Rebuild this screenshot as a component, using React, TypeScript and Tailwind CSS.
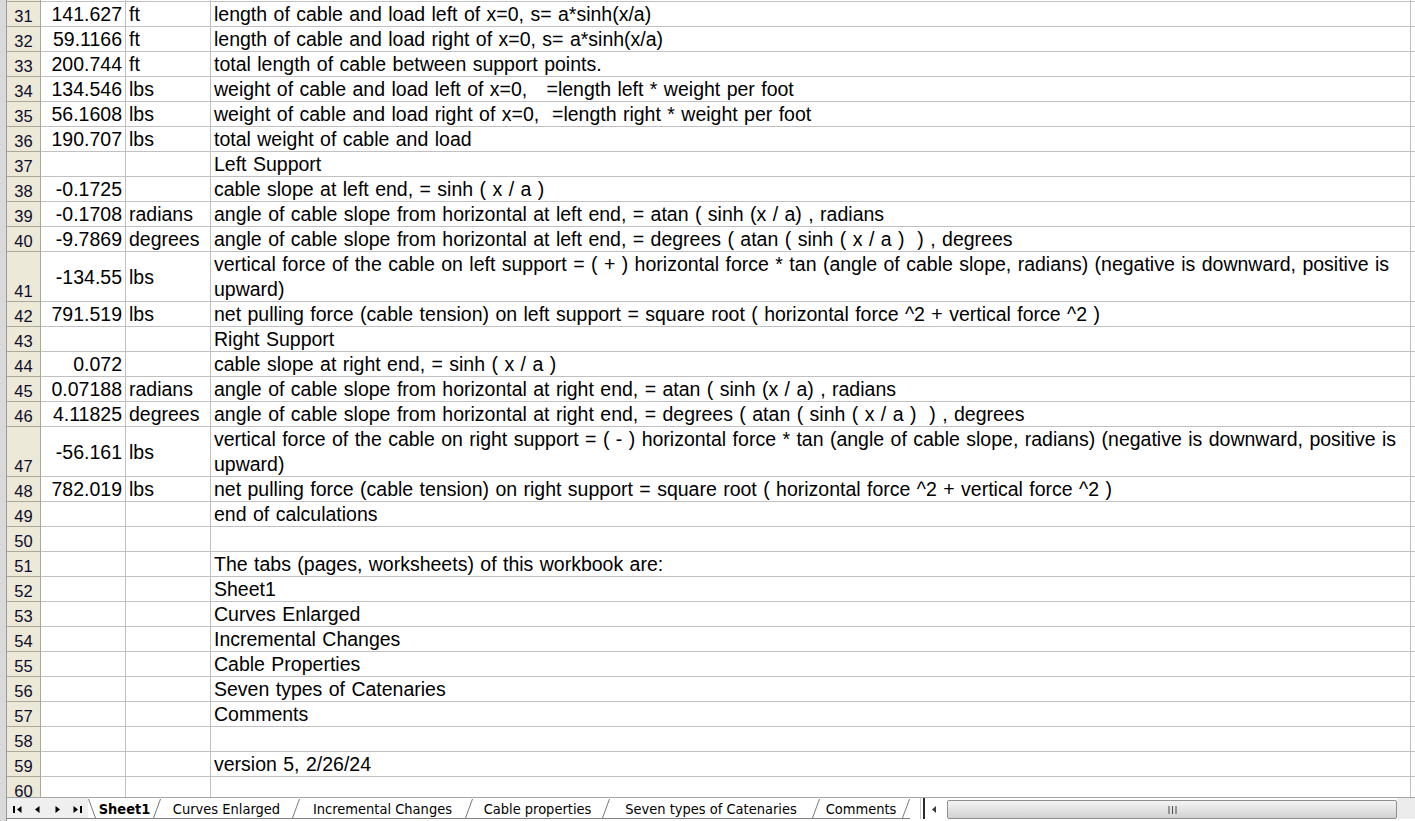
type Row = {
  n: number;
  b?: string;
  c?: string;
  d?: string[];
  tall?: boolean;
};

const rows: Row[] = [
  { n: 31, b: '141.627', c: 'ft', d: ['length of cable and load left of x=0, s= a*sinh(x/a)'] },
  { n: 32, b: '59.1166', c: 'ft', d: ['length of cable and load right of x=0, s= a*sinh(x/a)'] },
  { n: 33, b: '200.744', c: 'ft', d: ['total length of cable between support points.'] },
  { n: 34, b: '134.546', c: 'lbs', d: ['weight of cable and load left of x=0,   =length left * weight per foot'] },
  { n: 35, b: '56.1608', c: 'lbs', d: ['weight of cable and load right of x=0,  =length right * weight per foot'] },
  { n: 36, b: '190.707', c: 'lbs', d: ['total weight of cable and load'] },
  { n: 37, d: ['Left Support'] },
  { n: 38, b: '-0.1725', d: ['cable slope at left end, = sinh ( x / a )'] },
  { n: 39, b: '-0.1708', c: 'radians', d: ['angle of cable slope from horizontal at left end, = atan ( sinh (x / a) , radians'] },
  { n: 40, b: '-9.7869', c: 'degrees', d: ['angle of cable slope from horizontal at left end, = degrees ( atan ( sinh ( x / a )  ) , degrees'] },
  {
    n: 41,
    b: '-134.55',
    c: 'lbs',
    tall: true,
    d: [
      'vertical force of the cable on left support = ( + ) horizontal force * tan (angle of cable slope, radians) (negative is downward, positive is',
      'upward)',
    ],
  },
  { n: 42, b: '791.519', c: 'lbs', d: ['net pulling force (cable tension) on left support = square root ( horizontal force ^2 + vertical force ^2 )'] },
  { n: 43, d: ['Right Support'] },
  { n: 44, b: '0.072', d: ['cable slope at right end, = sinh ( x / a )'] },
  { n: 45, b: '0.07188', c: 'radians', d: ['angle of cable slope from horizontal at right end, = atan ( sinh (x / a) , radians'] },
  { n: 46, b: '4.11825', c: 'degrees', d: ['angle of cable slope from horizontal at right end, = degrees ( atan ( sinh ( x / a )  ) , degrees'] },
  {
    n: 47,
    b: '-56.161',
    c: 'lbs',
    tall: true,
    d: [
      'vertical force of the cable on right support = ( - ) horizontal force * tan (angle of cable slope, radians) (negative is downward, positive is',
      'upward)',
    ],
  },
  { n: 48, b: '782.019', c: 'lbs', d: ['net pulling force (cable tension) on right support = square root ( horizontal force ^2 + vertical force ^2 )'] },
  { n: 49, d: ['end of calculations'] },
  { n: 50 },
  { n: 51, d: ['The tabs (pages, worksheets) of this workbook are:'] },
  { n: 52, d: ['Sheet1'] },
  { n: 53, d: ['Curves Enlarged'] },
  { n: 54, d: ['Incremental Changes'] },
  { n: 55, d: ['Cable Properties'] },
  { n: 56, d: ['Seven types of Catenaries'] },
  { n: 57, d: ['Comments'] },
  { n: 58 },
  { n: 59, d: ['version 5, 2/26/24'] },
  { n: 60 },
];

const tabs = [
  { name: 'Curves Enlarged', w: 'w-[131px]' },
  { name: 'Incremental Changes', w: 'w-[165px]' },
  { name: 'Cable properties', w: 'w-[129px]' },
  { name: 'Seven types of Catenaries', w: 'w-[202px]' },
  { name: 'Comments', w: 'w-[82px]' },
];

export default function App() {
  return (
    <div className="flex h-[821px] w-[1415px] overflow-hidden bg-white font-['Liberation_Sans',Arial,sans-serif] text-black">
      <div className="w-[7px] shrink-0 border-r border-[#9a9a9a] bg-[#d9d9d9]" />
      <div className="flex min-w-0 flex-1 flex-col">
        <div className="min-h-0 flex-1 overflow-hidden">
          <div className="flex h-[2px]">
            <div className="w-[34px] shrink-0 border-r border-b border-[#aca899] bg-[#ece9d8]" />
            <div className="w-[85px] shrink-0 border-r border-b border-[#c0c0c0]" />
            <div className="w-[85px] shrink-0 border-r border-b border-[#c0c0c0]" />
            <div className="w-[1200px] shrink-0 border-r border-b border-[#c0c0c0]" />
            <div className="flex-1 border-b border-[#c0c0c0]" />
          </div>
          {rows.map((r) => (
            <SheetRow key={r.n} row={r} />
          ))}
        </div>
        <TabBar />
      </div>
    </div>
  );
}

function SheetRow({ row }: { row: Row }) {
  const h = row.tall ? 'h-[50px]' : 'h-[25px]';
  return (
    <div className={`flex ${h} text-[19.5px]`}>
      <div className="flex w-[34px] shrink-0 items-end justify-center border-r border-b border-[#aca899] bg-[#ece9d8] text-[16.5px] leading-[19px] text-[#0c0c2c]">
        {row.n}
      </div>
      <div className="flex w-[85px] shrink-0 items-center justify-end overflow-hidden whitespace-nowrap border-r border-b border-[#c0c0c0] pr-[3px] leading-[24px]">
        {row.b}
      </div>
      <div className="flex w-[85px] shrink-0 items-center overflow-hidden whitespace-nowrap border-r border-b border-[#c0c0c0] pl-[3px] leading-[24px]">
        {row.c}
      </div>
      <div className="w-[1200px] shrink-0 overflow-hidden whitespace-pre border-r border-b border-[#c0c0c0] pl-[3px] leading-[24px] [word-spacing:1px]">
        {row.d?.map((line, i) => (
          <div key={i} className={row.tall ? 'h-[25px] leading-[25px]' : ''}>
            {line}
          </div>
        ))}
      </div>
      <div className="flex-1 border-b border-[#c0c0c0]" />
    </div>
  );
}

function TabBar() {
  return (
    <div className="flex h-[24px] shrink-0 items-start border-t border-[#a5a5a5] bg-white font-['DejaVu_Sans_Condensed','DejaVu_Sans',Tahoma,sans-serif] text-[14.5px]">
      {/* sheet navigation buttons */}
      <div className="flex h-[21px] w-[81px] shrink-0 items-center border-b border-[#808080] bg-[#efefef] pt-[2px]">
        <NavIcon kind="first" className="ml-[6px]" />
        <NavIcon kind="prev" className="ml-[13px]" />
        <NavIcon kind="next" className="ml-[15px]" />
        <NavIcon kind="last" className="ml-[13px]" />
      </div>
      <div className="flex h-[21px] shrink-0 items-stretch border-b border-[#808080]">
        <Slant back />
        <div className="flex w-[57px] items-center justify-center bg-white pt-[3px] font-bold">Sheet1</div>
        <Slant />
        {tabs.map((t) => (
          <div key={t.name} className="flex items-stretch">
            <div className={`flex ${t.w} items-center justify-center whitespace-nowrap pt-[3px]`}>{t.name}</div>
            <Slant />
          </div>
        ))}
      </div>
      <div className="ml-[10px] h-[21px] w-[5px] shrink-0 border-l border-r-2 border-l-[#c8c8c8] border-r-[#2a2a2a]" />
      <div className="flex h-[21px] w-[22px] shrink-0 items-center pt-[2px] pl-[7px]">
        <svg width="5" height="7" viewBox="0 0 5 7" aria-hidden>
          <path d="M4 0v7L0 3.5Z" fill="#3a3a3a" />
        </svg>
      </div>
      <div className="mt-[2px] flex h-[19px] w-[450px] shrink-0 items-center justify-center rounded-[2px] border border-[#8f8f8f] bg-gradient-to-b from-[#f4f4f4] to-[#d2d2d2]">
        <svg width="9" height="8" viewBox="0 0 9 8" aria-hidden>
          <path d="M1 0v8M4.5 0v8M8 0v8" stroke="#4a4a4a" strokeWidth="1" />
        </svg>
      </div>
      <div className="h-[21px] flex-1 bg-[#ececec]" />
    </div>
  );
}

function Slant({ back }: { back?: boolean }) {
  return (
    <svg width="8" height="21" viewBox="0 0 8 21" className="shrink-0" aria-hidden>
      <path d={back ? 'M0.5 1L7.5 20' : 'M0.5 20L7.5 1'} stroke="#7a7a7a" strokeWidth="1" fill="none" />
    </svg>
  );
}

function NavIcon({ kind, className }: { kind: 'first' | 'prev' | 'next' | 'last'; className?: string }) {
  const icons: Record<string, { w: number; d: string }> = {
    first: { w: 9, d: 'M0 0h2v7H0ZM8.5 0v7L4 3.5Z' },
    prev: { w: 5, d: 'M4.5 0v7L0 3.5Z' },
    next: { w: 5, d: 'M0.5 0v7L5 3.5Z' },
    last: { w: 9, d: 'M0.5 0v7L5 3.5ZM7 0h2v7H7Z' },
  };
  const ic = icons[kind];
  return (
    <svg width={ic.w} height="7" viewBox={`0 0 ${ic.w} 7`} className={className} aria-hidden>
      <path d={ic.d} fill="#000" />
    </svg>
  );
}
